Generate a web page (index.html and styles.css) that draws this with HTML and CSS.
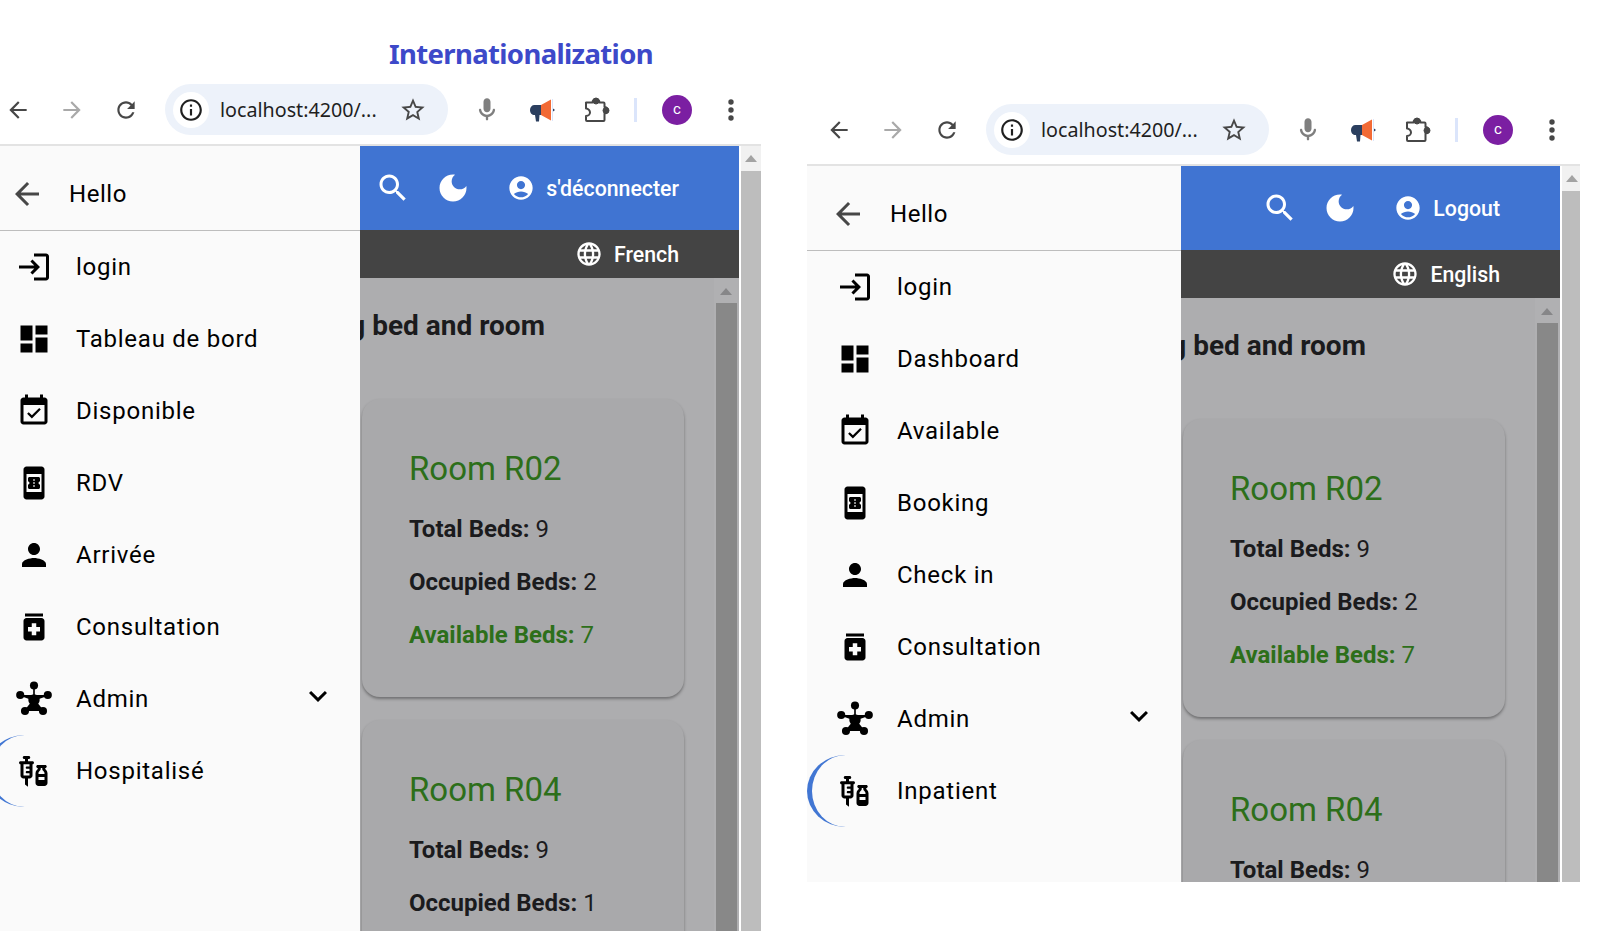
FILE: index.html
```html
<!DOCTYPE html>
<html lang="en">
<head>
<meta charset="utf-8">
<title>Internationalization</title>
<link rel="stylesheet" href="styles.css">
</head>
<body>
<svg class="defs" aria-hidden="true">
  <symbol id="i-back" viewBox="0 0 24 24"><path d="M20 11H7.83l5.59-5.59L12 4l-8 8 8 8 1.41-1.41L7.83 13H20v-2z"/></symbol>
  <symbol id="i-forward" viewBox="0 0 24 24"><path d="M4 11h12.17l-5.59-5.59L12 4l8 8-8 8-1.41-1.41L16.17 13H4v-2z"/></symbol>
  <symbol id="i-reload" viewBox="0 0 24 24"><path d="M17.65 6.35C16.2 4.9 14.21 4 12 4c-4.42 0-7.99 3.58-7.99 8s3.57 8 7.99 8c3.73 0 6.84-2.55 7.73-6h-2.08c-.82 2.33-3.04 4-5.65 4-3.31 0-6-2.69-6-6s2.69-6 6-6c1.66 0 3.14.69 4.22 1.78L13 11h7V4l-2.35 2.35z"/></symbol>
  <symbol id="i-info" viewBox="0 0 24 24"><path d="M11 7h2v2h-2zm0 4h2v6h-2zm1-9C6.48 2 2 6.48 2 12s4.48 10 10 10 10-4.48 10-10S17.52 2 12 2zm0 18c-4.41 0-8-3.59-8-8s3.59-8 8-8 8 3.59 8 8-3.59 8-8 8z"/></symbol>
  <symbol id="i-star" viewBox="0 0 24 24"><path d="M22 9.24l-7.19-.62L12 2 9.19 8.63 2 9.24l5.46 4.73L5.82 21 12 17.27 18.18 21l-1.63-7.03L22 9.24zM12 15.4l-3.76 2.27 1-4.28-3.32-2.88 4.38-.38L12 6.1l1.71 4.04 4.38.38-3.32 2.88 1 4.28L12 15.4z"/></symbol>
  <symbol id="i-mic" viewBox="0 0 24 24"><path d="M12 14c1.66 0 3-1.34 3-3V5c0-1.66-1.34-3-3-3S9 3.34 9 5v6c0 1.66 1.34 3 3 3zm5.91-3c-.49 0-.9.36-.98.85C16.52 14.2 14.47 16 12 16s-4.52-1.8-4.93-4.15c-.08-.49-.49-.85-.98-.85-.61 0-1.09.54-1 1.14.49 3 2.89 5.35 5.91 5.78V20c0 .55.45 1 1 1s1-.45 1-1v-2.08c3.02-.43 5.42-2.78 5.91-5.78.1-.6-.39-1.14-1-1.14z"/></symbol>
  <symbol id="i-mega" viewBox="0 0 28 28">
    <path fill="#2b3f5f" d="M14 9H7.500C5 9 3 11 3 14s2 5 4.500 5H8l1 6.500h3L12.500 19H14z"/>
    <path fill="#f26a35" d="M14 9l10-5.500v21L14 19z"/>
    <path fill="#dbe5fb" d="M25 3h1v22h-1z"/>
    <path fill="#2b3f5f" d="M26 12.500l2 1.500-2 1.500z"/>
  </symbol>
  <symbol id="i-puzzle" viewBox="0 0 28 28">
    <path fill="none" stroke-width="2" stroke-linejoin="round" d="M4 6.500h6.500a3.500 3.500 0 0 1 7 0h4a1 1 0 0 1 1 1V11a2.600 2.600 0 0 1 0 6.500V24a1 1 0 0 1-1 1H5a1 1 0 0 1-1-1v-4c2.500 0 4-2 4-3.500S6.500 12.500 4 12.500V7a.5.5 0 0 1 0-.5z"/>
    <circle cx="14" cy="5" r="3"/><circle cx="24" cy="14.500" r="3"/>
  </symbol>
  <symbol id="i-dots" viewBox="0 0 28 28"><circle cx="14" cy="6" r="2.700"/><circle cx="14" cy="14" r="2.700"/><circle cx="14" cy="22" r="2.700"/></symbol>
  <symbol id="i-search" viewBox="0 0 24 24"><path d="M15.500 14h-.79l-.28-.27C15.410 12.590 16 11.110 16 9.500 16 5.910 13.090 3 9.500 3S3 5.910 3 9.500 5.910 16 9.500 16c1.610 0 3.090-.59 4.230-1.570l.27.28v.79l5 4.990L20.490 19l-4.990-5zm-6 0C7.010 14 5 11.990 5 9.500S7.010 5 9.500 5 14 7.010 14 9.500 11.990 14 9.500 14z"/></symbol>
  <symbol id="i-moon" viewBox="0 0 24 24"><path d="M12 3c-4.970 0-9 4.030-9 9s4.030 9 9 9 9-4.030 9-9c0-.46-.04-.92-.1-1.360-.98 1.370-2.580 2.260-4.400 2.260-2.980 0-5.400-2.420-5.400-5.400 0-1.810.89-3.420 2.260-4.400-.44-.06-.9-.1-1.360-.1z"/></symbol>
  <symbol id="i-account" viewBox="0 0 24 24"><path d="M12 2C6.480 2 2 6.480 2 12s4.480 10 10 10 10-4.480 10-10S17.520 2 12 2zm0 4c1.930 0 3.500 1.570 3.500 3.500S13.930 13 12 13s-3.500-1.570-3.500-3.500S10.070 6 12 6zm0 14c-2.030 0-4.430-.82-6.140-2.880C7.550 15.800 9.680 15 12 15s4.450.8 6.140 2.120C16.430 19.180 14.030 20 12 20z"/></symbol>
  <symbol id="i-globe" viewBox="0 0 24 24"><path d="M11.990 2C6.470 2 2 6.480 2 12s4.470 10 9.990 10C17.520 22 22 17.520 22 12S17.520 2 11.990 2zm6.930 6h-2.950c-.32-1.250-.78-2.450-1.380-3.560 1.840.63 3.370 1.910 4.330 3.560zM12 4.040c.83 1.200 1.480 2.530 1.910 3.960h-3.820c.43-1.430 1.080-2.760 1.910-3.960zM4.260 14C4.100 13.360 4 12.690 4 12s.1-1.360.26-2h3.380c-.08.66-.14 1.320-.14 2s.06 1.340.14 2H4.260zm.82 2h2.950c.32 1.250.78 2.450 1.380 3.560-1.840-.63-3.370-1.900-4.330-3.560zm2.950-8H5.080c.96-1.660 2.490-2.930 4.330-3.560C8.810 5.550 8.350 6.750 8.030 8zM12 19.960c-.83-1.200-1.480-2.530-1.910-3.960h3.820c-.43 1.430-1.080 2.760-1.910 3.960zM14.340 14H9.660c-.09-.66-.16-1.320-.16-2s.07-1.350.16-2h4.680c.09.65.16 1.320.16 2s-.07 1.340-.16 2zm.25 5.560c.6-1.110 1.060-2.310 1.380-3.560h2.950c-.96 1.650-2.490 2.930-4.330 3.560zM16.360 14c.08-.66.14-1.320.14-2s-.06-1.340-.14-2h3.380c.16.64.26 1.310.26 2s-.1 1.360-.26 2h-3.380z"/></symbol>
  <symbol id="i-login" viewBox="0 0 24 24"><path d="M11 7L9.600 8.400l2.600 2.600H2v2h10.200l-2.600 2.600L11 17l5-5-5-5zm9 12h-8v2h8c1.100 0 2-.9 2-2V5c0-1.100-.9-2-2-2h-8v2h8v14z"/></symbol>
  <symbol id="i-dashboard" viewBox="0 0 24 24"><path d="M3 13h8V3H3v10zm0 8h8v-6H3v6zm10 0h8V11h-8v10zm0-18v6h8V3h-8z"/></symbol>
  <symbol id="i-event" viewBox="0 0 24 24"><path d="M16.530 11.060L15.470 10l-4.880 4.880-2.120-2.120-1.060 1.060L10.590 17l5.940-5.940zM19 3h-1V1h-2v2H8V1H6v2H5c-1.110 0-1.990.9-1.990 2L3 19c0 1.100.89 2 2 2h14c1.100 0 2-.9 2-2V5c0-1.100-.9-2-2-2zm0 16H5V8h14v11z"/></symbol>
  <symbol id="i-book" viewBox="0 0 24 24"><path d="M17 1H7c-1.100 0-2 .9-2 2v18c0 1.100.9 2 2 2h10c1.100 0 2-.9 2-2V3c0-1.100-.9-2-2-2zM7 18V6h10v12H7zm9-7V9c0-.55-.45-1-1-1H9c-.55 0-.99.45-.99 1v2c.55 0 .99.45.99 1s-.44 1-1 1v2c0 .55.45 1 1 1h6c.55 0 1-.45 1-1v-2c-.55 0-1-.45-1-1s.45-1 1-1zm-3.500 3.500h-1v-1h1v1zm0-2h-1v-1h1v1zm0-2h-1v-1h1v1z"/></symbol>
  <symbol id="i-person" viewBox="0 0 24 24"><path d="M12 12c2.210 0 4-1.790 4-4s-1.790-4-4-4-4 1.790-4 4 1.790 4 4 4zm0 2c-2.670 0-8 1.340-8 4v2h16v-2c0-2.660-5.330-4-8-4z"/></symbol>
  <symbol id="i-med" viewBox="0 0 24 24"><path d="M6 3h12v2H6zm11 3H7c-1.100 0-2 .9-2 2v11c0 1.100.9 2 2 2h10c1.100 0 2-.9 2-2V8c0-1.100-.9-2-2-2zm-1 9h-2.500v2.500h-3V15H8v-3h2.500V9.500h3V12H16v3z"/></symbol>
  <symbol id="i-hub" viewBox="0 0 24 24">
    <path stroke="currentColor" stroke-width="1.100" d="M12 3v9.600M2.800 9.300 12 12.600l9.200-3.300M6 20l6-7.400 6 7.400"/>
    <circle cx="12" cy="3" r="2.700"/><circle cx="2.800" cy="9.300" r="2.700"/><circle cx="21.200" cy="9.300" r="2.700"/>
    <circle cx="6" cy="20" r="2.700"/><circle cx="18" cy="20" r="2.700"/><circle cx="12" cy="12.600" r="3.800"/>
  </symbol>
  <symbol id="i-vaccines" viewBox="0 0 24 24"><path fill-rule="evenodd" d="M11 5.500H8V4h.5c.55 0 1-.45 1-1s-.45-1-1-1h-3c-.55 0-1 .45-1 1s.45 1 1 1H6v1.500H3c-.55 0-1 .45-1 1s.45 1 1 1V15c0 1.100.9 2 2 2h1v4l2 1.500V17h1c1.100 0 2-.9 2-2V7.500c.55 0 1-.45 1-1s-.45-1-1-1zM9 9H7.250c-.41 0-.75.34-.75.75s.34.75.75.75H9V12H7.250c-.41 0-.75.34-.75.75s.34.75.75.75H9V15H5V7.500h4V9zm10.500 1.500V10c.55 0 1-.45 1-1s-.45-1-1-1h-5c-.55 0-1 .45-1 1s.45 1 1 1v.5c0 .5-1.500 1.160-1.500 3V20c0 1.100.9 2 2 2h4c1.100 0 2-.9 2-2v-6.500c0-1.840-1.500-2.500-1.500-3zM16.500 10.500V10h1v.5c0 1.600 1.500 1.450 1.500 3V14h-4v-.5c0-1.550 1.500-1.400 1.500-3zM15 16h4v2h-4v-2z"/></symbol>
  <symbol id="i-chevron" viewBox="0 0 24 24"><path d="M16.590 8.590L12 13.170 7.410 8.590 6 10l6 6 6-6z"/></symbol>
</svg>

<h1 class="page-title">Internationalization</h1>

<section class="window window-fr">
  <header class="toolbar">
    <span class="tb-btn"><svg class="tb-arrow ink-dark"><use href="#i-back"/></svg></span>
    <span class="tb-btn"><svg class="tb-arrow ink-faint"><use href="#i-forward"/></svg></span>
    <span class="tb-btn"><svg class="tb-arrow ink-dark"><use href="#i-reload"/></svg></span>
    <div class="omnibox">
      <span class="omni-info"><svg class="omni-info-icon"><use href="#i-info"/></svg></span>
      <span class="omni-url">localhost:4200/...</span>
      <svg class="omni-star ink-dark"><use href="#i-star"/></svg>
    </div>
    <span class="tb-btn tb-first"><svg class="tb-icon ink-mic"><use href="#i-mic"/></svg></span>
    <span class="tb-btn"><svg class="tb-icon"><use href="#i-mega"/></svg></span>
    <span class="tb-btn tb-wide"><svg class="tb-icon ink-dark stroke-dark"><use href="#i-puzzle"/></svg></span>
    <span class="tb-sep"></span>
    <span class="avatar">c</span>
    <span class="tb-btn tb-last"><svg class="tb-icon ink-dark"><use href="#i-dots"/></svg></span>
  </header>
  <div class="body">
    <nav class="sidenav">
      <div class="nav-head"><svg class="nav-icon ink-dark"><use href="#i-back"/></svg><span class="nav-hello">Hello</span></div>
      <a class="nav-row"><svg class="nav-icon"><use href="#i-login"/></svg><span>login</span></a>
      <a class="nav-row"><svg class="nav-icon"><use href="#i-dashboard"/></svg><span>Tableau de bord</span></a>
      <a class="nav-row"><svg class="nav-icon"><use href="#i-event"/></svg><span>Disponible</span></a>
      <a class="nav-row"><svg class="nav-icon"><use href="#i-book"/></svg><span>RDV</span></a>
      <a class="nav-row"><svg class="nav-icon"><use href="#i-person"/></svg><span>Arrivée</span></a>
      <a class="nav-row"><svg class="nav-icon"><use href="#i-med"/></svg><span>Consultation</span></a>
      <a class="nav-row"><svg class="nav-icon"><use href="#i-hub"/></svg><span>Admin</span><svg class="nav-icon nav-chevron"><use href="#i-chevron"/></svg></a>
      <a class="nav-row nav-active"><svg class="nav-icon"><use href="#i-vaccines"/></svg><span>Hospitalisé</span></a>
    </nav>
    <main class="main">
      <div class="topbar">
        <svg class="top-icon"><use href="#i-search"/></svg>
        <svg class="top-icon top-moon"><use href="#i-moon"/></svg>
        <svg class="top-account"><use href="#i-account"/></svg>
        <span class="top-label">s'déconnecter</span>
      </div>
      <div class="langbar">
        <svg class="top-account"><use href="#i-globe"/></svg>
        <span class="top-label">French</span>
      </div>
      <div class="content">
        <div class="scroll-area">
          <h2 class="heading">Managing bed and room</h2>
          <article class="card">
            <h3 class="room">Room R02</h3>
            <p class="stat"><b>Total Beds:</b> 9</p>
            <p class="stat"><b>Occupied Beds:</b> 2</p>
            <p class="stat stat-free"><b>Available Beds:</b> 7</p>
          </article>
          <article class="card">
            <h3 class="room">Room R04</h3>
            <p class="stat"><b>Total Beds:</b> 9</p>
            <p class="stat"><b>Occupied Beds:</b> 1</p>
            <p class="stat stat-free"><b>Available Beds:</b> 8</p>
          </article>
        </div>
        <div class="inner-scroll"><span class="inner-up"><i class="tri tri-dim"></i></span><span class="inner-thumb"></span></div>
      </div>
    </main>
    <div class="outer-scroll"><span class="outer-up"><i class="tri"></i></span><span class="outer-thumb"></span></div>
  </div>
</section>

<section class="window window-en">
  <header class="toolbar">
    <span class="tb-btn"><svg class="tb-arrow ink-dark"><use href="#i-back"/></svg></span>
    <span class="tb-btn"><svg class="tb-arrow ink-faint"><use href="#i-forward"/></svg></span>
    <span class="tb-btn"><svg class="tb-arrow ink-dark"><use href="#i-reload"/></svg></span>
    <div class="omnibox">
      <span class="omni-info"><svg class="omni-info-icon"><use href="#i-info"/></svg></span>
      <span class="omni-url">localhost:4200/...</span>
      <svg class="omni-star ink-dark"><use href="#i-star"/></svg>
    </div>
    <span class="tb-btn tb-first"><svg class="tb-icon ink-mic"><use href="#i-mic"/></svg></span>
    <span class="tb-btn"><svg class="tb-icon"><use href="#i-mega"/></svg></span>
    <span class="tb-btn tb-wide"><svg class="tb-icon ink-dark stroke-dark"><use href="#i-puzzle"/></svg></span>
    <span class="tb-sep"></span>
    <span class="avatar">c</span>
    <span class="tb-btn tb-last"><svg class="tb-icon ink-dark"><use href="#i-dots"/></svg></span>
  </header>
  <div class="body">
    <nav class="sidenav">
      <div class="nav-head"><svg class="nav-icon ink-dark"><use href="#i-back"/></svg><span class="nav-hello">Hello</span></div>
      <a class="nav-row"><svg class="nav-icon"><use href="#i-login"/></svg><span>login</span></a>
      <a class="nav-row"><svg class="nav-icon"><use href="#i-dashboard"/></svg><span>Dashboard</span></a>
      <a class="nav-row"><svg class="nav-icon"><use href="#i-event"/></svg><span>Available</span></a>
      <a class="nav-row"><svg class="nav-icon"><use href="#i-book"/></svg><span>Booking</span></a>
      <a class="nav-row"><svg class="nav-icon"><use href="#i-person"/></svg><span>Check in</span></a>
      <a class="nav-row"><svg class="nav-icon"><use href="#i-med"/></svg><span>Consultation</span></a>
      <a class="nav-row"><svg class="nav-icon"><use href="#i-hub"/></svg><span>Admin</span><svg class="nav-icon nav-chevron"><use href="#i-chevron"/></svg></a>
      <a class="nav-row nav-active"><svg class="nav-icon"><use href="#i-vaccines"/></svg><span>Inpatient</span></a>
    </nav>
    <main class="main">
      <div class="topbar">
        <svg class="top-icon"><use href="#i-search"/></svg>
        <svg class="top-icon top-moon"><use href="#i-moon"/></svg>
        <svg class="top-account"><use href="#i-account"/></svg>
        <span class="top-label">Logout</span>
      </div>
      <div class="langbar">
        <svg class="top-account"><use href="#i-globe"/></svg>
        <span class="top-label">English</span>
      </div>
      <div class="content">
        <div class="scroll-area">
          <h2 class="heading">Managing bed and room</h2>
          <article class="card">
            <h3 class="room">Room R02</h3>
            <p class="stat"><b>Total Beds:</b> 9</p>
            <p class="stat"><b>Occupied Beds:</b> 2</p>
            <p class="stat stat-free"><b>Available Beds:</b> 7</p>
          </article>
          <article class="card">
            <h3 class="room">Room R04</h3>
            <p class="stat"><b>Total Beds:</b> 9</p>
            <p class="stat"><b>Occupied Beds:</b> 1</p>
            <p class="stat stat-free"><b>Available Beds:</b> 8</p>
          </article>
        </div>
        <div class="inner-scroll"><span class="inner-up"><i class="tri tri-dim"></i></span><span class="inner-thumb"></span></div>
      </div>
    </main>
    <div class="outer-scroll"><span class="outer-up"><i class="tri"></i></span><span class="outer-thumb"></span></div>
  </div>
</section>
</body>
</html>
```
FILE: styles.css
```css
* { box-sizing: border-box; }
html, body { margin: 0; height: 100%; overflow: hidden; background: #fff; }
body { position: relative; width: 1607px; height: 931px; font-family: Roboto, "Liberation Sans", sans-serif; color: #000; }
.defs { position: absolute; width: 0; height: 0; overflow: hidden; }
svg { display: block; flex: none; fill: currentColor; }

.page-title { position: absolute; left: 389px; top: 34px; margin: 0; font: 700 27.500px/40px "Noto Sans", sans-serif; color: #3d49c9; letter-spacing: -.65px; }

.window { position: absolute; display: flex; flex-direction: column; overflow: hidden; background: #fff; }
.window-fr { left: -14px; top: 76px; width: 775px; height: 855px; }
.window-en { left: 807px; top: 96px; width: 773px; height: 786px; }

.toolbar { flex: none; display: flex; align-items: center; height: 70px; padding: 0 0 0 5px; border-bottom: 2px solid #e3e3e3; }
.tb-btn { flex: none; width: 54px; display: flex; justify-content: center; }
.tb-first { margin-left: 12px; }
.tb-wide { width: 56px; }
.tb-last { margin-left: 12px; }
.tb-arrow { width: 26px; height: 26px; }
.tb-icon { width: 28px; height: 28px; }
.ink-dark { color: #474747; }
.ink-faint { color: #a9a9a9; }
.ink-mic { color: #7f7f7f; }
.stroke-dark { stroke: #474747; }
.tb-sep { flex: none; width: 3px; height: 24px; margin-left: 10px; background: #dbe5fb; }
.avatar { flex: none; width: 30px; height: 30px; margin-left: 25px; border-radius: 50%; background: #7b1fa2; color: #fff; font: 400 15px/28px Roboto, sans-serif; text-align: center; }

.omnibox { flex: none; display: flex; align-items: center; width: 283px; height: 51px; margin: 0 0 1px 12px; padding: 0 21px 0 8px; border-radius: 26px; background: #edf2fa; }
.omni-info { flex: none; display: flex; align-items: center; justify-content: center; width: 36px; height: 36px; border-radius: 50%; background: #fff; }
.omni-info-icon { width: 26px; height: 26px; color: #1f1f1f; }
.omni-url { margin-left: 11px; font: 400 19.700px/1 "Noto Sans", sans-serif; color: #1f1f1f; white-space: nowrap; }
.omni-star { width: 28px; height: 28px; margin-left: auto; }

.body { flex: 1; min-height: 0; display: flex; }

.sidenav { flex: none; width: 374px; background: #fafafa; }
.nav-head { display: flex; align-items: center; gap: 24px; height: 85px; padding: 12px 0 0 23px; border-bottom: 1px solid #bdbdbd; }
.nav-hello { font-size: 24px; letter-spacing: .55px; }
.nav-row { position: relative; display: flex; align-items: center; gap: 24px; height: 72px; padding: 0 24px 0 30px; font-size: 24px; letter-spacing: .75px; color: #000; }
.nav-icon { width: 36px; height: 36px; overflow: visible; }
.nav-chevron { margin: 0 0 7px auto; }
.nav-active::before { content: ""; position: absolute; left: 0; top: 0; width: 72px; height: 72px; border-radius: 50%; border-left: 5px solid #4176d3; }

.main { flex: none; width: 379px; display: flex; flex-direction: column; overflow: hidden; background: #adadaf; }
.topbar { flex: none; display: flex; align-items: center; justify-content: flex-end; height: 84px; padding-right: 60px; background: #4074d2; color: #fff; }
.langbar { flex: none; display: flex; align-items: center; justify-content: flex-end; height: 48px; padding-right: 60px; background: #444; color: #fff; }
.top-icon { width: 36px; height: 36px; }
.top-moon { margin-left: 24px; }
.top-account { width: 28px; height: 28px; margin-left: 36px; }
.top-label { margin-left: 11px; font-size: 21.300px; font-weight: 500; white-space: nowrap; }

.content { flex: 1; min-height: 0; display: flex; }
.scroll-area { flex: 1; min-width: 0; overflow: hidden; padding-left: 2px; }
.heading { margin: 18px 0 44px -122px; font-size: 28px; line-height: 59px; font-weight: 700; color: #1b1b1d; white-space: nowrap; }
.card { width: 322px; height: 298px; margin-bottom: 23px; padding: 50px 47px 37px; border-radius: 18px; background: #a9a9ab; box-shadow: 0 2px 3px rgba(0,0,0,.35); color: #1b1b1d; }
.card + .card { height: 320px; }
.room { margin: 0 0 14px; font-size: 33px; line-height: 40px; font-weight: 400; color: #2d6f1a; }
.stat { margin: 0; font-size: 24px; line-height: 53px; font-weight: 400; white-space: nowrap; }
.stat b { font-weight: 700; }
.stat-free { color: #2d6f1a; }

.inner-scroll { flex: none; width: 25px; display: flex; flex-direction: column; padding-right: 2px; background: #b0b0b2; }
.inner-up { flex: none; height: 25px; display: flex; justify-content: center; padding-top: 10px; }
.inner-thumb { flex: 1; margin-left: 2px; background: #888; }
.outer-scroll { flex: none; width: 20px; margin-left: 2px; display: flex; flex-direction: column; background: #f1f1f1; }
.outer-up { flex: none; height: 25px; display: flex; justify-content: center; padding-top: 9px; }
.outer-thumb { flex: 1; background: #bdbdbd; }
.tri { display: block; width: 0; height: 0; border-left: 6px solid transparent; border-right: 6px solid transparent; border-bottom: 7px solid #a3a3a3; }
.tri-dim { border-bottom-color: #868688; }
```
